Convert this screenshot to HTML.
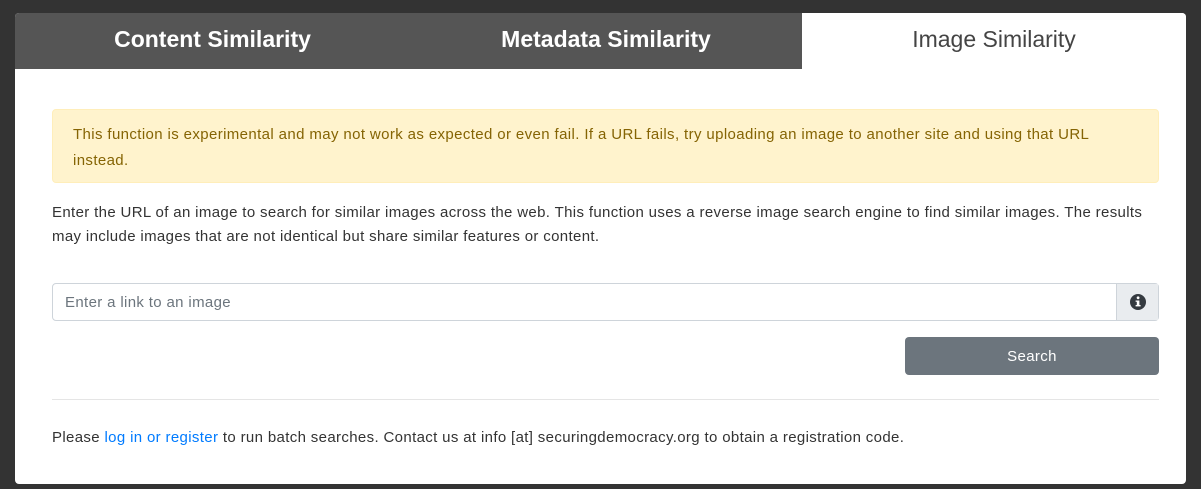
<!DOCTYPE html>
<html><head><style>
body{margin:0;background:#333;width:1201px;height:489px;overflow:hidden;font-family:"Liberation Sans",sans-serif;}
.panel{position:absolute;left:15px;top:13px;width:1171px;height:471px;background:#fff;border-radius:4px;overflow:hidden;}
.tabs{position:absolute;left:0;top:0;width:1171px;height:56px;}
.tab{position:absolute;top:0;height:56px;line-height:52px;text-align:center;font-size:23px;font-weight:bold;color:#fff;background:#555;}
.tab.active{background:#fff;color:#444;font-weight:normal;}
.alert{position:absolute;left:37px;top:96px;width:1107px;height:74px;box-sizing:border-box;background:#fff3cd;border:1px solid #ffeeba;border-radius:4px;color:#856404;font-size:15px;line-height:26px;padding:12px 20px;letter-spacing:0.38px;}
p{position:absolute;margin:0;font-size:15px;line-height:24px;color:#333;letter-spacing:0.35px;white-space:nowrap;}
.input{position:absolute;left:37px;top:270px;width:1107px;height:38px;box-sizing:border-box;border:1px solid #ced4da;border-radius:4px;}
.input span{position:absolute;left:12px;top:10px;font-size:15px;color:#6c757d;letter-spacing:0.35px;}
.addon{position:absolute;right:0;top:0;width:41px;height:36px;background:#e9ecef;border-left:1px solid #ced4da;}
.btn{position:absolute;left:890px;top:324px;width:254px;height:38px;background:#6c757d;border-radius:4px;color:#fff;text-align:center;line-height:40px;font-size:15px;letter-spacing:0.35px;}
hr{position:absolute;left:37px;top:386px;width:1107px;margin:0;border:0;border-top:1px solid #e5e5e5;}
a{color:#007bff;text-decoration:none;}
</style></head><body>
<div class="panel">
<div class="tabs">
<div class="tab" style="left:0;width:395px">Content Similarity</div>
<div class="tab" style="left:395px;width:392px">Metadata Similarity</div>
<div class="tab active" style="left:787px;width:384px">Image Similarity</div>
</div>
<div class="alert">This function is experimental and may not work as expected or even fail. If a URL fails, try uploading an image to another site and using that URL<br>instead.</div>
<p style="left:37px;top:188px;">Enter the URL of an image to search for similar images across the web. This function uses a reverse image search engine to find similar images. The results<br>may include images that are not identical but share similar features or content.</p>
<div class="input"><span>Enter a link to an image</span><div class="addon"><svg width="41" height="36" viewBox="0 0 41 36"><circle cx="21" cy="18" r="8" fill="#343a40"/><rect x="19.8" y="16.5" width="2.6" height="5.5" fill="#fff"/><rect x="18.6" y="21" width="5" height="1.4" fill="#fff"/><rect x="18.6" y="16.5" width="2.5" height="1.3" fill="#fff"/><circle cx="21.1" cy="13.8" r="1.4" fill="#fff"/></svg></div></div>
<div class="btn">Search</div>
<hr>
<p style="left:37px;top:413px">Please <a>log in or register</a> to run batch searches. Contact us at info [at] securingdemocracy.org to obtain a registration code.</p>
</div>
</body></html>
